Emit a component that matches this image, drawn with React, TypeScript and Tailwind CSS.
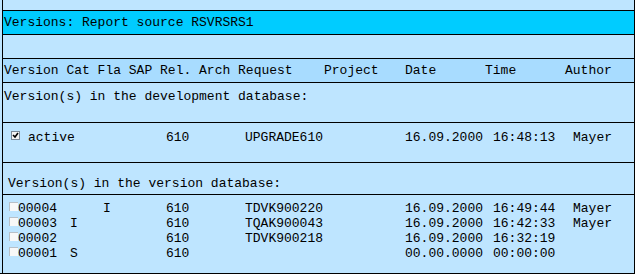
import React from 'react';

const mono = { fontFamily: '"Liberation Mono", "Courier New", monospace' };

type Version = {
  id: string;
  cat: string;
  fla: string;
  rel: string;
  request: string;
  date: string;
  time: string;
  author: string;
};

const versions: Version[] = [
  { id: '00004', cat: '', fla: 'I', rel: '610', request: 'TDVK900220', date: '16.09.2000', time: '16:49:44', author: 'Mayer' },
  { id: '00003', cat: 'I', fla: '', rel: '610', request: 'TQAK900043', date: '16.09.2000', time: '16:42:33', author: 'Mayer' },
  { id: '00002', cat: '', fla: '', rel: '610', request: 'TDVK900218', date: '16.09.2000', time: '16:32:19', author: '' },
  { id: '00001', cat: 'S', fla: '', rel: '610', request: '', date: '00.00.0000', time: '00:00:00', author: '' },
];

export default function App() {
  return (
    <div className="w-[637px] h-[277px] bg-white text-black text-[13px] leading-[15px]" style={mono}>
      <div className="w-[635px] h-[274px] bg-[#bee5ff] border-r border-b border-black pl-[2px]">
        <div className="h-full border-l border-black flex flex-col">
          <div className="h-[10px]" />

          {/* Titel */}
          <div className="h-[24px] border-t border-black bg-[#00ccff] flex items-center pl-[1px]">
            Versions: Report source RSVRSRS1
          </div>

          <div className="h-[24px] border-t border-black" />

          {/* Spaltenkopf */}
          <div className="h-[24px] border-t border-black bg-[#a8dcff] flex items-center pl-[1px] whitespace-pre">
            <span className="w-[320px]">Version Cat Fla SAP Rel. Arch Request</span>
            <span className="w-[81px]">Project</span>
            <span className="w-[80px]">Date</span>
            <span className="w-[80px]">Time</span>
            <span>Author</span>
          </div>

          <div className="h-[40px] border-t border-black pt-[6px] pl-[1px]">
            Version(s) in the development database:
          </div>

          {/* aktive Version */}
          <div className="h-[40px] border-t border-black pt-[7px]">
            <div className="flex items-start h-[15px] whitespace-pre">
              <span className="ml-[8px] mt-[1px] w-[9px] h-[9px] border border-[#7a8a99] bg-[#f4f4f4] flex items-center justify-center">
                <svg width="7" height="7" viewBox="0 0 7 7">
                  <path d="M1 3 L3 5 L6 1" stroke="#000" strokeWidth="1.6" fill="none" />
                </svg>
              </span>
              <span className="ml-[8px] w-[138px]">active</span>
              <span className="w-[79px]">610</span>
              <span className="w-[160px]">UPGRADE610</span>
              <span className="w-[88px]">16.09.2000</span>
              <span className="w-[80px]">16:48:13</span>
              <span>Mayer</span>
            </div>
          </div>

          <div className="h-[32px] border-t border-black pt-[13px] pl-[5px]">
            Version(s) in the version database:
          </div>

          {/* Versionsliste */}
          <div className="flex-1 border-t border-black pt-[6px] flex flex-col">
            {versions.map((v) => (
              <div key={v.id} className="flex items-start h-[15px] whitespace-pre">
                <span className="ml-[6px] mt-[1px] w-[9px] h-[9px] bg-[#f8f8f8] border-t border-l border-[#b8c0c8]" />
                <span className="w-[52px]">{v.id}</span>
                <span className="w-[33px]">{v.cat}</span>
                <span className="w-[63px]">{v.fla}</span>
                <span className="w-[79px]">{v.rel}</span>
                <span className="w-[160px]">{v.request}</span>
                <span className="w-[88px]">{v.date}</span>
                <span className="w-[80px]">{v.time}</span>
                <span>{v.author}</span>
              </div>
            ))}
          </div>
        </div>
      </div>
    </div>
  );
}
